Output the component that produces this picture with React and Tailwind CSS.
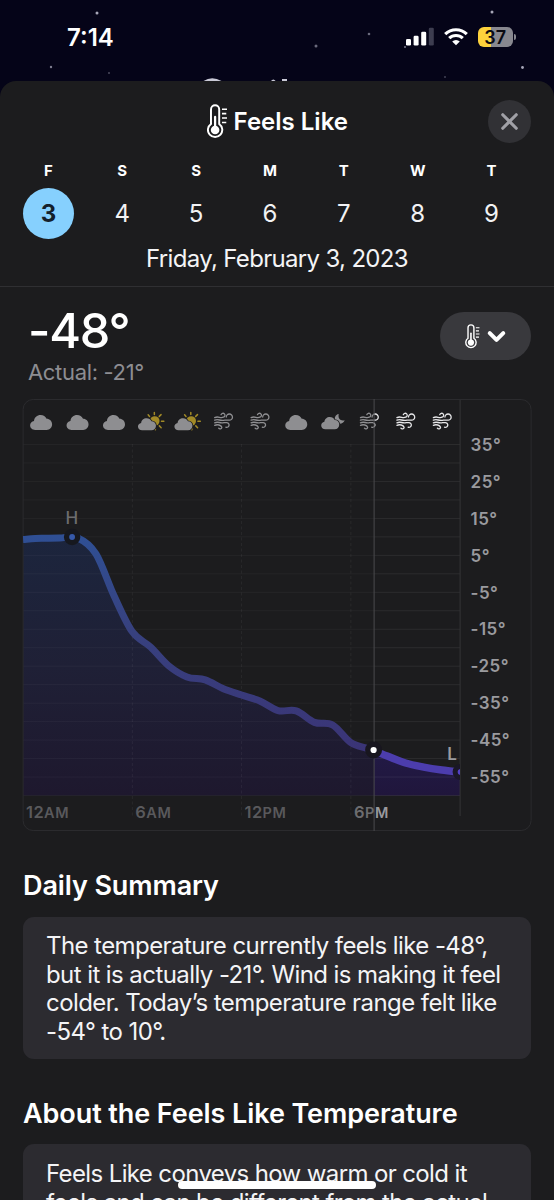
import { X, ChevronDown } from "lucide-react";

const days = [
    { letter: 'F', date: 3 },
    { letter: 'S', date: 4 },
    { letter: 'S', date: 5 },
    { letter: 'M', date: 6 },
    { letter: 'T', date: 7 },
    { letter: 'W', date: 8 },
    { letter: 'T', date: 9 },
];

// Feels like temperature for every hour from 12AM
const temps = [
    9.3, 9.6, 9.7, 9.7, 5.4, -6, -15.7, -19.8, -24.9, -27.9, -28.7, -31.1, -32.8,
    -34.4, -37, -37.1, -40.2, -40.9, -45.7, -47.4, -49.3, -51.2, -52.3, -53.1, -53.7,
];

const conditions = [
    'cloud', 'cloud', 'cloud', 'cloudSun', 'cloudSun', 'wind',
    'wind', 'cloud', 'cloudMoon', 'wind', 'wind', 'wind',
];

const stars = [
    [97, 13, 1.5, 0.8], [51, 67, 1.2, 0.6], [109, 73, 1, 0.35], [492, 12, 1.5, 0.8], [369, 34, 1.3, 0.5],
    [316, 46, 1.5, 0.5], [522.5, 67.5, 1.4, 0.8], [445, 77, 1, 0.3], [405, 47, 1, 0.6],
];

// Chart geometry
const PLOT_LEFT = 0.5;
const PLOT_RIGHT = 437.5;
const PLOT_BOTTOM = 396.5;
const NOW_X = 351.5;

const xAt = (hour) => PLOT_LEFT + (hour * (PLOT_RIGHT - PLOT_LEFT)) / 24;
const yAt = (temp) => 45.5 + (35 - temp) * 3.695;

const buildLine = () => {
    const pts = temps.map((t, i) => [xAt(i), yAt(t)]);
    let d = `M${pts[0][0]} ${pts[0][1]}`;
    for (let i = 0; i < pts.length - 1; i++) {
        const p0 = pts[i - 1] || pts[i];
        const p1 = pts[i];
        const p2 = pts[i + 1];
        const p3 = pts[i + 2] || p2;
        d += ` C${p1[0] + (p2[0] - p0[0]) / 6} ${p1[1] + (p2[1] - p0[1]) / 6} ${p2[0] - (p3[0] - p1[0]) / 6} ${p2[1] - (p3[1] - p1[1]) / 6} ${p2[0]} ${p2[1]}`;
    }
    return d;
};

const CLOUD = "M5 15C2.2 15 0 13 0 10.3C0 8 1.7 6.2 3.9 5.9C4.2 2.6 7 0 10.5 0C13.3 0 15.4 1.4 16.5 3.7C19.6 3.7 22 6.1 22 9.3C22 12.5 19.6 15 16.6 15Z";

const Thermometer = ({ className }) => (
    <svg className={className} viewBox="0 0 20 34" fill="none" stroke="currentColor">
        <path d="M3.9 19.4V5.2a4 4 0 0 1 8 0v14.2a7 7 0 1 1-8 0Z" strokeWidth="1.9" />
        <circle cx="7.9" cy="25.3" r="4.2" fill="currentColor" stroke="none" />
        <path d="M7.9 25V12.5" strokeWidth="2.2" strokeLinecap="round" />
        <path d="M14.6 5h4.9M14.6 9.3h4.2M14.6 13.6h4.9M14.6 17.9h4.2" strokeWidth="1.5" />
    </svg>
);

const Condition = ({ type, x, color, sun }) => {
    if (type === 'cloud') {
        return <path d={CLOUD} transform={`translate(${x - 11} 16)`} fill={color} />;
    }
    if (type === 'cloudSun') {
        return (
            <g transform={`translate(${x - 12.5} 13)`}>
                <circle cx="16.8" cy="9" r="4.8" fill={sun} />
                <path
                    d="M16.4 2.4V.4M21.3 4.4l1.8-1.8M23.5 9.3h2.4M21.4 13.9l1.8 1.8M11.6 4.4L10.2 2.8M17.4 16.2v1.6"
                    stroke={sun}
                    strokeWidth="1.5"
                    strokeLinecap="round"
                />
                <path d={CLOUD} transform="translate(0 6.3) scale(.82 .8)" fill={color} stroke="#1c1c1e" strokeWidth="2" paintOrder="stroke" />
            </g>
        );
    }
    if (type === 'cloudMoon') {
        return (
            <g transform={`translate(${x - 11.5} 13)`}>
                <path d="M17.5 2C16.6 7 19.6 9.3 23.5 8.2C22.4 11 19.8 12.2 17 11.4C14.2 10.4 12.7 7.6 13.9 4.9C14.6 3.4 15.8 2.3 17.5 2Z" fill={color} />
                <path d={CLOUD} transform="translate(0 5) scale(.82 .82)" fill={color} stroke="#1c1c1e" strokeWidth="2" paintOrder="stroke" />
            </g>
        );
    }
    return (
        <g transform={`translate(${x - 9.5} 14)`} fill="none" stroke={color} strokeWidth="1.3" strokeLinecap="round">
            <path d="M.8 4.6Q3 3.6 5.5 4.3T9.6 4.2A2 2 0 1 0 7.2 1.7" />
            <path d="M.8 7.2Q3 6.3 5.5 7T11 7.2H15.4A3.1 3.1 0 1 0 12.4 4.1" />
            <path d="M.8 9.8Q3 8.9 5.5 9.5T10 9.6H12.4A2.4 2.4 0 1 1 12 14.2" />
            <path d="M.8 12.3Q3 11.4 5.2 12T8 14.2A1.8 1.8 0 0 1 4.8 15.2" />
        </g>
    );
};

const HourLabel = ({ x, hour, period, fill }) => (
    <text x={x} y="419" fontSize="16.5" fontWeight="600" fill={fill} letterSpacing="0.3">
        {hour}
        <tspan fontSize="14.5" letterSpacing="0.7">{period}</tspan>
    </text>
);

const Chart = () => {
    const line = buildLine();
    const area = `${line} V${PLOT_BOTTOM} H${PLOT_LEFT} Z`;

    return (
        <svg className="block w-[510px] h-[433px] font-[Inter,sans-serif]" viewBox="-.6 0 510 433">
            <defs>
                <linearGradient id="pastLine" gradientUnits="userSpaceOnUse" x1="0" y1="138" x2="0" y2="370">
                    <stop offset="0" stopColor="#2f4f94" />
                    <stop offset=".4" stopColor="#37417f" />
                    <stop offset="1" stopColor="#3b3275" />
                </linearGradient>
                <linearGradient id="pastArea" gradientUnits="userSpaceOnUse" x1="0" y1="138" x2="0" y2="396">
                    <stop offset="0" stopColor="#1c253d" />
                    <stop offset=".5" stopColor="#1f2036" />
                    <stop offset="1" stopColor="#1e182e" />
                </linearGradient>
                <linearGradient id="nextArea" gradientUnits="userSpaceOnUse" x1="0" y1="350" x2="0" y2="396">
                    <stop offset="0" stopColor="#221a46" />
                    <stop offset="1" stopColor="#20163c" />
                </linearGradient>
                <clipPath id="past"><rect x="0" y="0" width={NOW_X} height="433" /></clipPath>
                <clipPath id="next"><rect x={NOW_X} y="0" width={PLOT_RIGHT - NOW_X} height="433" /></clipPath>
            </defs>

            <path d={area} fill="url(#pastArea)" clipPath="url(#past)" />
            <path d={area} fill="url(#nextArea)" clipPath="url(#next)" />

            {/* Grid */}
            {Array.from({ length: 20 }, (_, i) => (
                <g key={i} stroke="#fff">
                    <path d={`M${PLOT_LEFT} ${45.5 + i * 18.475}H${NOW_X}`} strokeOpacity=".04" />
                    <path d={`M${NOW_X} ${45.5 + i * 18.475}H${PLOT_RIGHT}`} strokeOpacity=".07" />
                </g>
            ))}
            {[6, 12, 18].map(h => (
                <path key={h} d={`M${xAt(h)} 45V417`} stroke="#fff" strokeOpacity=".06" strokeDasharray="3 2.5" />
            ))}
            <path d={`M${PLOT_RIGHT} 1V417`} stroke="#343437" />
            <rect x=".5" y=".5" width="508" height="431" rx="10" fill="none" stroke="#2b2b2e" />

            {conditions.map((type, i) => {
                const x = 18.5 + i * 36.45;
                return (
                    <g key={i}>
                        <g clipPath="url(#past)">
                            <Condition type={type} x={x} color="#8e8e91" sun="#a28a27" />
                        </g>
                        <g clipPath="url(#next)">
                            <Condition type={type} x={x} color="#e6e6e8" sun="#ffd426" />
                        </g>
                    </g>
                );
            })}

            {/* Temperature line */}
            <path d={line} fill="none" stroke="url(#pastLine)" strokeWidth="7" clipPath="url(#past)" />
            <path d={line} fill="none" stroke="#4c3dad" strokeWidth="7.5" clipPath="url(#next)" />

            <path d={`M${NOW_X} 0V432`} stroke="#4b4b4e" />

            <circle cx="49.5" cy="138" r="8.2" fill="#16181f" />
            <circle cx="49.5" cy="138" r="2.9" fill="#3659aa" />
            <text x="49.2" y="125" textAnchor="middle" fontSize="17" fontWeight="500" fill="#6c6c6f">H</text>

            <circle cx="351" cy="351" r="8.5" fill="#18161f" />
            <circle cx="351" cy="351" r="3.1" fill="#fff" />

            <g clipPath="url(#next)">
                <circle cx="438" cy="373" r="8" fill="#1a1728" />
                <circle cx="438" cy="373" r="3" fill="#5442c4" />
            </g>
            <text x="429.5" y="361" textAnchor="middle" fontSize="17" fontWeight="600" fill="#9a9a9e">L</text>

            {[35, 25, 15, 5, -5, -15, -25, -35, -45, -55].map(t => (
                <text key={t} x="448" y={yAt(t) + 6.2} fontSize="17" fontWeight="600" fill="#9a9a9e" letterSpacing="0.45">
                    {t}°
                </text>
            ))}

            <g clipPath="url(#past)">
                <HourLabel x={3.5} hour="12" period="AM" fill="#59595c" />
                <HourLabel x={112.7} hour="6" period="AM" fill="#59595c" />
                <HourLabel x={222} hour="12" period="PM" fill="#59595c" />
                <HourLabel x={331.5} hour="6" period="PM" fill="#6c6c6f" />
            </g>
            <g clipPath="url(#next)">
                <HourLabel x={331.5} hour="6" period="PM" fill="#9a9a9e" />
            </g>
        </svg>
    );
};

const StatusBar = () => (
    <div className="relative flex h-[81px] items-start justify-between overflow-hidden pl-[67px] pr-[38px]">
        <svg className="absolute inset-0 h-full w-full" viewBox="0 0 554 81">
            {stars.map(([x, y, r, o]) => (
                <circle key={x} cx={x} cy={y} r={r} fill="#cfcfe0" opacity={o} />
            ))}
            {/* Top edge of the screen title behind the sheet */}
            <path d="M203.5 81Q212 75.4 221.5 81Z" fill="#c9c9d6" />
            <path d="M271 81q2.3-3.2 4.6 0ZM282 79h5v2h-5Z" fill="#c9c9d6" />
        </svg>
        <span className="relative mt-[24px] text-[24px] leading-7 font-semibold text-white">7:14</span>
        <div className="relative mt-[27px] flex items-center">
            <svg className="h-5 w-7" viewBox="0 0 28 20">
                <rect x="0" y="12" width="5" height="6.5" rx="1.3" fill="#fff" />
                <rect x="7.6" y="8.8" width="5" height="9.7" rx="1.3" fill="#fff" />
                <rect x="15.2" y="4.8" width="5" height="13.7" rx="1.3" fill="#fff" />
                <rect x="22.8" y=".8" width="5" height="17.7" rx="1.3" fill="#3d3d50" />
            </svg>
            <svg className="ml-[10px] h-5 w-6" viewBox="0 0 24 20" fill="none" stroke="#fff" strokeWidth="3.1">
                <path d="M1.2 7.1A15.4 15.4 0 0 1 22.8 7.1" />
                <path d="M5.2 11.2A9.8 9.8 0 0 1 18.8 11.2" />
                <path d="M12 18.3L8.2 14.5A5.4 5.4 0 0 1 15.8 14.5Z" fill="#fff" stroke="none" />
            </svg>
            <div className="ml-[10px] flex items-center gap-px">
                <div className="flex h-[19.5px] w-[35.5px] items-center justify-center rounded-[6px] bg-linear-to-r from-[#fdd23c] from-37% to-[#88888f] to-37% text-[18px] font-semibold text-[#0b0b12]">
                    37
                </div>
                <div className="h-[6px] w-[2px] rounded-r-full bg-[#88888f]"></div>
            </div>
        </div>
    </div>
);

export default function App() {
    return (
        <div className="relative h-[1200px] w-[554px] overflow-hidden bg-[#050418] font-[Inter,sans-serif] text-white">
            <StatusBar />

            <div className="h-[1119px] overflow-hidden rounded-t-[16px] bg-[#1c1c1e]">
                {/* Sheet header */}
                <div className="flex h-[206px] flex-col border-b border-[#2f2f32]">
                    <div className="grid h-[80px] grid-cols-[1fr_auto_1fr] items-center pr-[23px] pl-[23px]">
                        <span></span>
                        <div className="flex items-center gap-[6px] pl-[1px]">
                            <Thermometer className="h-[35px] w-[20.5px]" />
                            <h1 className="pt-[2px] text-[24px] font-semibold">Feels Like</h1>
                        </div>
                        <button className="flex size-[43px] items-center justify-center justify-self-end rounded-full bg-[#313135] text-[#a0a0a6]">
                            <X size={27} strokeWidth={2.8} />
                        </button>
                    </div>

                    <div className="grid grid-cols-7 pr-[25.5px] pl-[11.5px]">
                        {days.map((day, index) => (
                            <div key={index} className="flex flex-col items-center">
                                <span className="h-[27px] pt-px text-[15px] leading-[18px] font-bold">{day.letter}</span>
                                <span
                                    className={`flex size-[51px] items-center justify-center rounded-full pt-px text-[24px] ${index === 0 ? 'bg-[#86d0fe] font-bold text-[#14202b]' : 'text-[#f2f2f4]'}`}
                                >
                                    {day.date}
                                </span>
                            </div>
                        ))}
                    </div>
                    <p className="mt-[6px] text-center text-[24px] leading-7 tracking-[-0.028em] text-[#f4f4f6]">
                        Friday, February 3, 2023
                    </p>
                </div>

                <div className="px-[22px]">
                    <div className="flex h-[112px] items-start justify-between pr-[1px]">
                        <div className="pl-[6px]">
                            <div className="mt-[16px] text-[48.5px] leading-[56px] font-medium tracking-[-0.025em]">-48°</div>
                            <div className="-mt-px text-[22px] leading-7 tracking-[-0.015em] text-[#8d8d92]">Actual: -21°</div>
                        </div>
                        <button className="mt-[25px] flex h-[48px] w-[91px] items-center justify-center gap-[3px] rounded-full bg-[#39393d] pl-[3px]">
                            <Thermometer className="h-[25px] w-[15px]" />
                            <ChevronDown size={27} strokeWidth={3.6} />
                        </button>
                    </div>

                    <Chart />

                    <h2 className="mt-[38px] pl-[1px] text-[27px] leading-8 font-semibold tracking-[-0.004em]">Daily Summary</h2>
                    <div className="mt-[15px] ml-[1px] h-[142px] w-[508px] rounded-[11px] bg-[#2c2b30] px-[23px] pt-[15px] text-[24px] leading-[28.5px] tracking-[-0.024em] whitespace-nowrap text-[#f4f4f6]">
                        <p>The temperature currently feels like -48°,</p>
                        <p>but it is actually -21°. Wind is making it feel</p>
                        <p>colder. Today’s temperature range felt like</p>
                        <p>-54° to 10°.</p>
                    </div>

                    <h2 className="mt-[39px] pl-[1px] text-[27px] leading-8 font-semibold tracking-[-0.003em]">
                        About the Feels Like Temperature
                    </h2>
                    <div className="mt-[14px] ml-[1px] h-[142px] w-[508px] rounded-[11px] bg-[#2c2b30] px-[23px] pt-[16px] text-[24px] leading-[28.5px] tracking-[-0.026em] whitespace-nowrap text-[#f4f4f6]">
                        <p>Feels Like conveys how warm or cold it</p>
                        <p>feels and can be different from the actual</p>
                    </div>
                </div>
            </div>

            {/* Home indicator */}
            <div className="absolute top-[1181px] left-[178px] h-[8px] w-[198px] rounded-full bg-white"></div>
        </div>
    );
}
